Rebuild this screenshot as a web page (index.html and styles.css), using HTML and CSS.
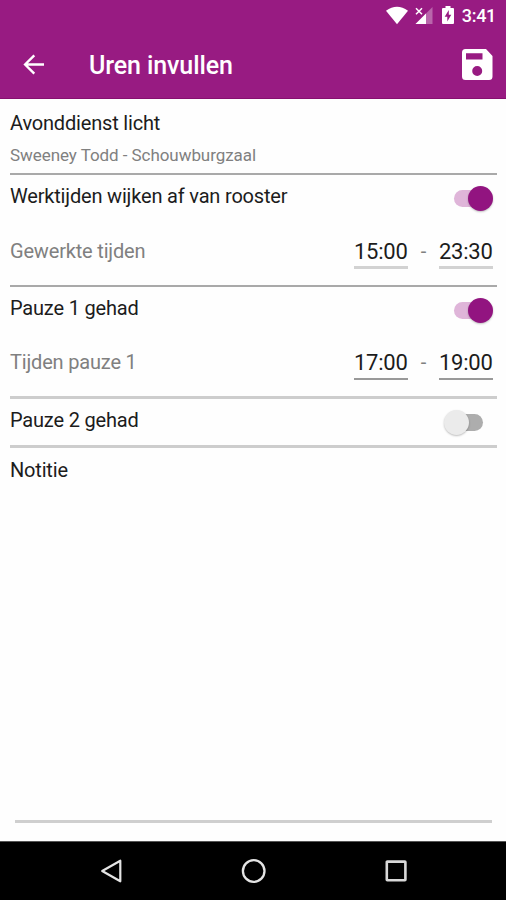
FILE: index.html
```html
<!DOCTYPE html>
<html lang="nl">
<head>
    <meta charset="UTF-8">
    <meta name="viewport" content="width=device-width, initial-scale=1.0">
    <title>Uren invullen</title>
    <link rel="stylesheet" href="styles.css">
</head>
<body>

<header class="header">
    <div class="status-bar">
        <svg class="wifi" width="24" height="20" viewBox="0 0 24 20">
            <path fill="#fff" d="M12 18.2 L1 4.7 Q12 -3.3 23 4.7 Z"/>
        </svg>
        <svg class="signal" width="18" height="18" viewBox="0 0 18 18">
            <path fill="#b966ab" d="M17.5 0 V17 H.5 Z"/>
            <path fill="#fff" d="M11 6.5 V17 H.5 Z"/>
            <path stroke="#fff" stroke-width="1.5" d="M1 1.2 L7 7.2 M7 1.2 L1 7.2"/>
        </svg>
        <svg class="battery" width="12" height="19" viewBox="0 0 12 19">
            <path fill="#fff" d="M3.5 0 H8.5 V2 H11 Q12 2 12 3 V17 Q12 18 11 18 H1 Q0 18 0 17 V3 Q0 2 1 2 H3.5 Z"/>
            <path fill="#981b82" d="M6.8 4 L2.7 10.8 H5.3 V15.5 L9.3 8.7 H6.8 Z"/>
        </svg>
        <span class="clock">3:41</span>
    </div>
    <div class="toolbar">
        <svg class="back" width="22" height="22" viewBox="0 0 22 22">
            <path fill="none" stroke="#fff" stroke-width="2.4" d="M21 10.5 H2.5 M11.3 1.3 L2.1 10.5 L11.3 19.7"/>
        </svg>
        <h1>Uren invullen</h1>
        <svg class="save" width="31" height="31" viewBox="0 0 31 31">
            <path fill="#fff" fill-rule="evenodd" d="M3.5 0 H24 L30.5 7 V27.5 Q30.5 31 27 31 H3.5 Q0 31 0 27.5 V3.5 Q0 0 3.5 0 Z M4 4.3 V10.5 H20.5 V4.3 Z M15.2 17 A5 5 0 1 0 15.2 27 A5 5 0 1 0 15.2 17 Z"/>
        </svg>
    </div>
</header>

<main class="form">
    <section class="section shift">
        <h2>Avonddienst licht</h2>
        <p>Sweeney Todd - Schouwburgzaal</p>
    </section>

    <section class="section">
        <div class="row">
            <h2>Werktijden wijken af van rooster</h2>
            <div class="switch on"><span class="thumb"></span></div>
        </div>
        <div class="times">
            <span class="label">Gewerkte tijden</span>
            <span class="time">15:00</span>
            <span class="dash">-</span>
            <span class="time">23:30</span>
        </div>
    </section>

    <section class="section thick">
        <div class="row">
            <h2>Pauze 1 gehad</h2>
            <div class="switch on"><span class="thumb"></span></div>
        </div>
        <div class="times thin">
            <span class="label">Tijden pauze 1</span>
            <span class="time">17:00</span>
            <span class="dash">-</span>
            <span class="time">19:00</span>
        </div>
    </section>

    <section class="section thick">
        <div class="row">
            <h2>Pauze 2 gehad</h2>
            <div class="switch"><span class="thumb"></span></div>
        </div>
    </section>

    <section class="note">
        <h2>Notitie</h2>
        <div class="note-field"></div>
    </section>
</main>

<nav class="nav-bar">
    <svg width="26" height="26" viewBox="0 0 26 26">
        <path fill="none" stroke="#e4e4e4" stroke-width="2.2" stroke-linejoin="round" d="M22.3 2.7 V23.3 L4.2 13 Z"/>
    </svg>
    <svg width="26" height="26" viewBox="0 0 26 26">
        <circle cx="12.7" cy="13" r="10.8" fill="none" stroke="#e4e4e4" stroke-width="2.3"/>
    </svg>
    <svg width="26" height="26" viewBox="0 0 26 26">
        <rect x="3.8" y="3.6" width="18.6" height="18.6" rx="0.5" fill="none" stroke="#d8d8d8" stroke-width="2.6"/>
    </svg>
</nav>

</body>
</html>
```

FILE: styles.css
```css
* {
    box-sizing: border-box;
}
body {
    margin: 0;
    height: 900px;
    display: flex;
    flex-direction: column;
    font-family: Roboto, sans-serif;
    background-color: #fefefe;
    color: #1c1c1c;
}
h1, h2, p {
    margin: 0;
    font-weight: 400;
}
svg {
    display: block;
    flex: none;
}
.header {
    height: 99px;
    background-color: #981b82;
    border-bottom: 1px solid #86106f;
    color: #ffffff;
}
.status-bar {
    height: 31px;
    display: flex;
    align-items: center;
    justify-content: flex-end;
    padding-right: 10px;
}
.signal {
    margin-left: 6px;
}
.battery {
    margin-left: 9px;
}
.clock {
    margin-left: 8px;
    font-size: 18px;
    font-weight: 500;
    line-height: 32px;
    letter-spacing: -0.3px;
}
.toolbar {
    height: 67px;
    display: flex;
    align-items: center;
    padding: 0 13px 0 23px;
}
.toolbar h1 {
    flex: 1;
    margin-left: 44px;
    padding-top: 2px;
    font-size: 25px;
    font-weight: 500;
    letter-spacing: -0.1px;
}
.form {
    flex: 1;
    display: flex;
    flex-direction: column;
    padding: 0 9px 0 10px;
}
.section {
    height: 112px;
    border-bottom: 2px solid #a9a9a9;
}
.section.thick {
    border-bottom: 3px solid #cdcdcd;
}
.section.thick:nth-child(4) {
    height: 49px;
}
.shift {
    height: 76px;
    padding-top: 12px;
}
h2 {
    font-size: 20px;
    line-height: 24px;
    letter-spacing: -0.18px;
}
.shift p {
    margin-top: 10px;
    font-size: 17px;
    line-height: 20px;
    letter-spacing: -0.06px;
    color: #808080;
}
.row {
    display: flex;
    justify-content: space-between;
    padding: 9px 4px 0 0;
}
.switch {
    width: 34px;
    height: 17px;
    margin: 6px 10px 0 0;
    border-radius: 9px;
    background-color: #adadad;
}
.switch.on {
    margin-right: 5px;
    background-color: #dfb5d9;
}
.thumb {
    display: block;
    width: 25px;
    height: 25px;
    margin: -4px 0 0 -5px;
    border-radius: 50%;
    background-color: #ebebeb;
    box-shadow: 0 1px 2px rgba(0, 0, 0, 0.25);
}
.on .thumb {
    margin-left: 14px;
    background-color: #921480;
}
.times {
    display: flex;
    align-items: flex-start;
    padding: 31px 4px 0 0;
}
.times.thin {
    padding-top: 30px;
}
.label {
    flex: 1;
    font-size: 20px;
    line-height: 24px;
    letter-spacing: -0.18px;
    color: #808080;
}
.time {
    width: 54px;
    height: 30px;
    border-bottom: 3px solid #d2d2d2;
    font-size: 22px;
    line-height: 25px;
    letter-spacing: -0.25px;
    white-space: nowrap;
}
.thin .time {
    height: 30px;
    border-bottom: 2px solid #999999;
}
.dash {
    width: 31px;
    text-align: center;
    font-size: 20px;
    line-height: 24px;
    color: #808080;
}
.note {
    flex: 1;
    display: flex;
    flex-direction: column;
    padding: 10px 0 18px;
}
.note-field {
    flex: 1;
    margin: 0 5px;
    border-bottom: 3px solid #cfcfcf;
}
.nav-bar {
    height: 59px;
    display: flex;
    align-items: center;
    justify-content: space-between;
    padding: 0 97px 0 98px;
    background-color: #000000;
    border-top: 1px solid #555555;
}
```
